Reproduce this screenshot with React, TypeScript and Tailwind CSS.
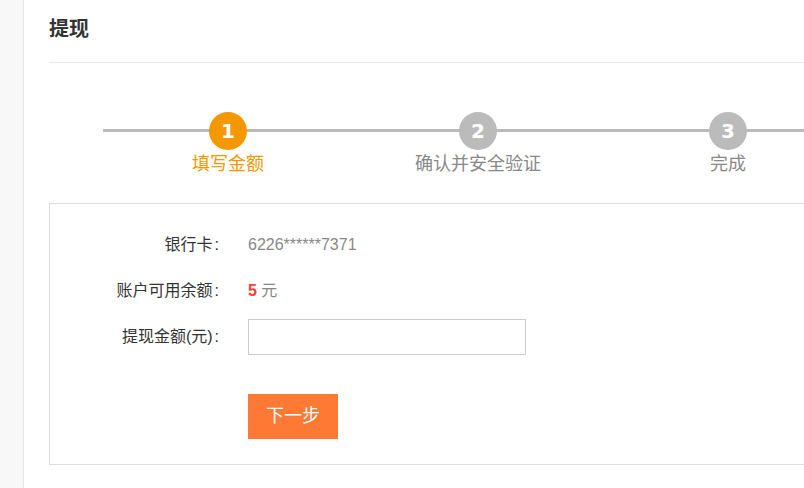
import React from 'react';

const font = { fontFamily: '"Liberation Sans", "Noto Sans CJK SC", sans-serif' };

const steps = [
  { n: 1, label: '填写金额', active: true },
  { n: 2, label: '确认并安全验证', active: false },
  { n: 3, label: '完成', active: false },
];

function Label({ text }: { text: string }) {
  return (
    <div className="w-[170px] text-right text-[16px] text-[#333]">
      {text}
      <span className="pl-[2px] pr-[1px]">:</span>
    </div>
  );
}

export default function App() {
  return (
    <div className="flex w-[804px] h-[488px] overflow-hidden bg-white" style={font}>
      {/* side strip */}
      <div className="w-[24px] shrink-0 bg-[#f8f8f8] border-r border-[#e6e6e6]" />

      <div className="pl-[25px] w-[900px] shrink-0">
        <div className="h-[63px] pt-[16px] border-b border-[#e8e8e8]">
          <h1 className="text-[20px] leading-[26px] font-bold text-[#333]">提现</h1>
        </div>

        {/* steps */}
        <div className="relative ml-[54px] mt-[49px] flex">
          <div className="absolute left-0 right-0 top-[17px] h-[3px] bg-[#bababa]" />
          {steps.map((s) => (
            <div key={s.n} className="relative w-[250px] flex flex-col items-center">
              <div
                className={
                  'w-[38px] h-[38px] rounded-full flex items-center justify-center text-white font-bold text-[20px] ' +
                  (s.active ? 'bg-[#f39800]' : 'bg-[#bbbbbb]')
                }
                style={{ fontFamily: '"DejaVu Sans", sans-serif' }}
              >
                {s.n}
              </div>
              <div
                className={
                  'mt-[2px] text-[18px] leading-[24px] ' + (s.active ? 'text-[#f39800]' : 'text-[#888]')
                }
              >
                {s.label}
              </div>
            </div>
          ))}
        </div>

        {/* form */}
        <div className="mt-[27px] border border-[#dddddd] pt-[23px] pb-[25px]">
          <div className="flex flex-col gap-[10px]">
            <div className="flex items-center h-[36px]">
              <Label text="银行卡" />
              <div className="ml-[28px] text-[16px] text-[#888]">6226******7371</div>
            </div>
            <div className="flex items-center h-[36px]">
              <Label text="账户可用余额" />
              <div className="ml-[28px] text-[16px] text-[#888]">
                <span className="font-bold text-[#ff3b3b]">5</span> 元
              </div>
            </div>
            <div className="flex items-center h-[36px]">
              <Label text="提现金额(元)" />
              <input
                type="text"
                className="ml-[28px] w-[278px] h-[36px] border border-[#cccccc] px-2 text-[16px] outline-none"
              />
            </div>
          </div>
          <button className="ml-[198px] mt-[39px] w-[90px] h-[45px] bg-[#fe7934] text-white text-[18px]">
            下一步
          </button>
        </div>
      </div>
    </div>
  );
}
